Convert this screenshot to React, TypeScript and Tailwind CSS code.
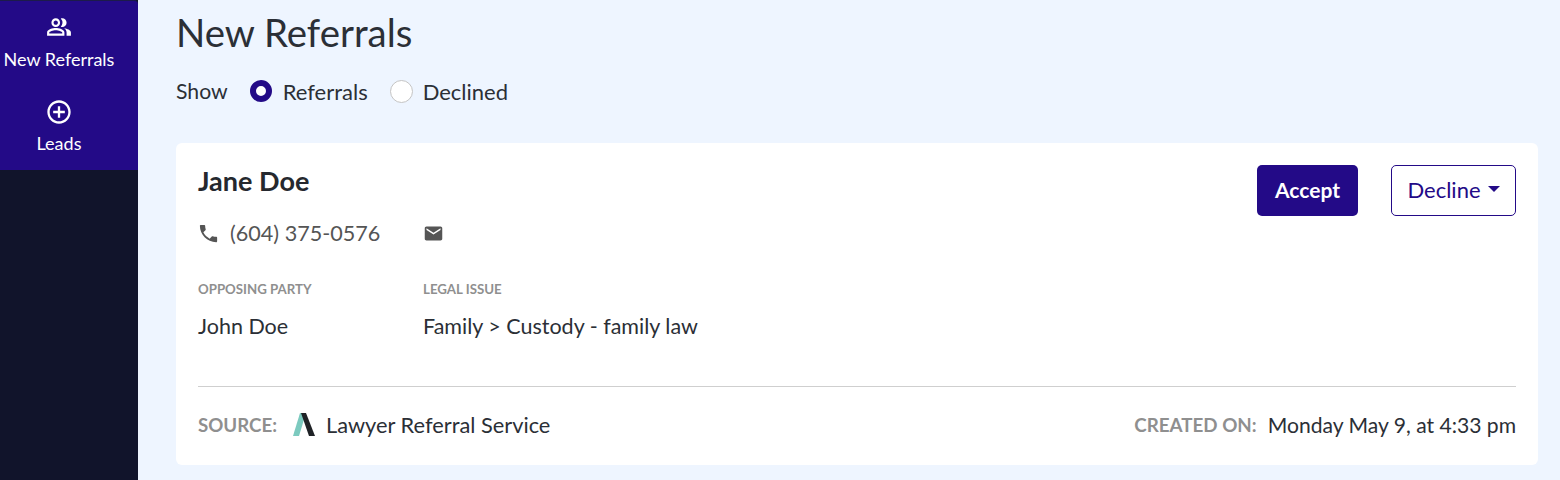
import { MdOutlinePeopleAlt, MdAddCircleOutline, MdPhone, MdEmail } from 'react-icons/md'

// barre latérale : entrées de navigation
function NavItem({ icon, label, className }: { icon: React.ReactNode; label: string; className: string }) {
  return (
    <div className={'flex w-[118px] flex-col items-center text-white ' + className}>
      {icon}
      <span className="text-[18px] leading-[20px]">{label}</span>
    </div>
  )
}

function Field({ label, value, className }: { label: string; value: string; className: string }) {
  return (
    <div className={className}>
      <div className="text-[13.25px] font-bold leading-[16px] text-[#8f8f8f]">{label}</div>
      <div className="mt-[17px] text-[21.5px] leading-[24px] text-[#2b2f36]">{value}</div>
    </div>
  )
}

export default function App() {
  return (
    <div className="flex h-[480px] w-[1560px] overflow-hidden bg-[#eef5ff] font-['Lato',sans-serif]">
      <aside className="w-[138px] shrink-0 bg-[#11142b]">
        <div className="h-[170px] rounded-tr-sm border-t border-[#1c1b4a] bg-[#230a87] pt-[13px]">
          <NavItem icon={<MdOutlinePeopleAlt size={26} className="mb-[9px]" />} label="New Referrals" className="" />
          <NavItem icon={<MdAddCircleOutline size={28} className="mb-[7px]" />} label="Leads" className="mt-[29px]" />
        </div>
      </aside>

      <main className="min-w-0 flex-1 px-[38px] pr-[22px]">
        <h1 className="mt-[10px] text-[38.4px] leading-[44px] text-[#2b2f36]">New Referrals</h1>
        <div className="mt-[22px] flex h-[30px] items-center text-[22px] text-[#2b2f36]">
          <span className="mt-px text-[21.2px]">Show</span>
          <span className="ml-[22px] h-[22px] w-[22px] rounded-full border-[6px] border-[#230a87] bg-white" />
          <span className="ml-[11px] mt-px">Referrals</span>
          <span className="ml-[22px] h-[23px] w-[23px] rounded-full border border-[#c4c4c4] bg-white" />
          <span className="ml-[10px] mt-px">Declined</span>
        </div>

        <section className="mt-[37px] h-[322px] rounded-md bg-white px-[22px]">
          <div className="flex items-start justify-between pt-[22px]">
            <div>
              <h2 className="text-[27px] font-bold leading-[32px] text-[#25282e]">Jane Doe</h2>
              <div className="mt-[24px] flex h-[24px] items-center text-[#555555]">
                <MdPhone size={23} className="-ml-px mt-px" />
                <span className="ml-[10px] text-[21.6px] leading-[24px]">(604) 375-0576</span>
                <MdEmail size={21} className="ml-[43px] mt-px" />
              </div>
            </div>
            <div className="flex items-center">
              <button className="h-[51px] w-[101px] rounded-[5px] bg-[#230a87] pb-[2px] text-[21px] font-bold text-white">Accept</button>
              <button className="ml-[33px] flex h-[51px] w-[125px] items-center justify-center rounded-[5px] border border-[#230a87] bg-white pb-[2px] text-[22px] text-[#230a87]">
                Decline
                <span className="ml-[7px] mb-px h-0 w-0 border-x-[6px] border-t-[6px] border-x-transparent border-t-[#230a87]" />
              </button>
            </div>
          </div>

          <div className="mt-[36px] flex">
            <Field label="OPPOSING PARTY" value="John Doe" className="w-[225px]" />
            <Field label="LEGAL ISSUE" value="Family > Custody - family law" className="" />
          </div>

          <div className="mt-[48px] flex h-[76px] items-center justify-between border-t border-[#cfcfcf]">
            <div className="flex items-center">
              <span className="mt-[2px] text-[18.7px] font-bold text-[#8f8f8f]">SOURCE:</span>
              <svg viewBox="0 0 24 26" className="ml-[15px] h-[26px] w-[24px]">
                <path d="M8 1h6L7 24H1z" fill="#7ccabf" />
                <path d="M9 1h5l9 23h-6z" fill="#1f2226" />
              </svg>
              <span className="ml-[10px] mt-px text-[21.8px] text-[#2b2f36]">Lawyer Referral Service</span>
            </div>
            <div className="flex items-center">
              <span className="mt-[2px] text-[18.8px] font-bold text-[#8f8f8f]">CREATED ON:</span>
              <span className="ml-[11px] text-[21.1px] text-[#2b2f36]">Monday May 9, at 4:33 pm</span>
            </div>
          </div>
        </section>
      </main>
    </div>
  )
}
